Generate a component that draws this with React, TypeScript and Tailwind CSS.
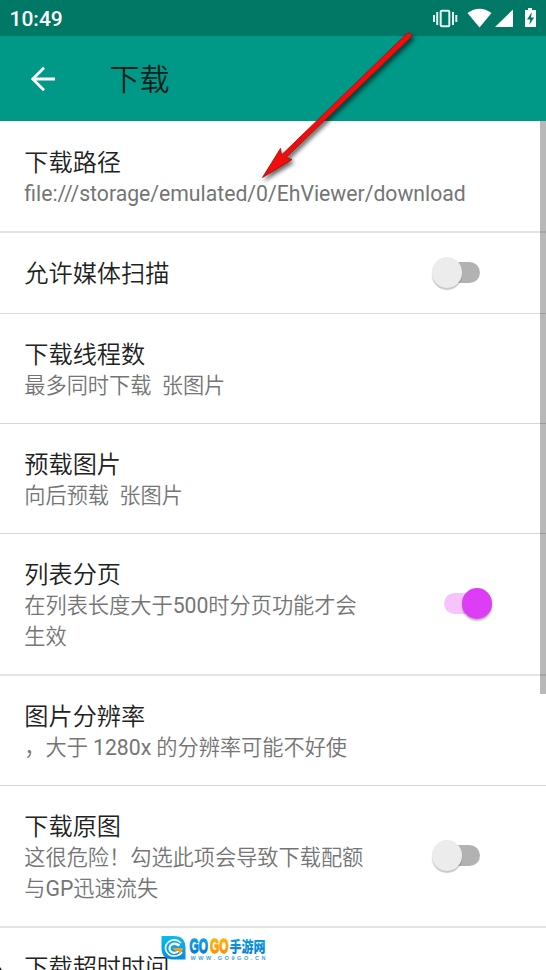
type Item = {
  title: string;
  lines?: string[];
  row: string;
  checked?: boolean;
};

const items: Item[] = [
  { title: "下载路径", lines: ["file:///storage/emulated/0/EhViewer/download"], row: "h-[112px] border-b-2 border-[#e4e4e4]" },
  { title: "允许媒体扫描", row: "h-[81px] border-b border-[#dadada]", checked: false },
  { title: "下载线程数", lines: ["最多同时下载  张图片"], row: "h-[110px] border-b border-[#d6d6d6]" },
  { title: "预载图片", lines: ["向后预载  张图片"], row: "h-[110px] border-b border-[#d6d6d6]" },
  { title: "列表分页", lines: ["在列表长度大于500时分页功能才会", "生效"], row: "h-[142px] border-b-2 border-[#e4e4e4]", checked: true },
  { title: "图片分辨率", lines: ["，大于 1280x 的分辨率可能不好使"], row: "h-[110px] border-b border-[#d6d6d6]" },
  { title: "下载原图", lines: ["这很危险！勾选此项会导致下载配额", "与GP迅速流失"], row: "h-[142px] border-b-2 border-[#e4e4e4]", checked: false },
];

function Toggle({ checked }: { checked: boolean }) {
  if (checked) {
    return (
      <div className="mr-[54px] mb-[2px] flex h-[31px] w-[48px] items-center rounded-full">
        <div className="h-[21px] w-[33px] rounded-l-full bg-[#f4c4fb]" />
        <div className="-ml-[15px] h-[31px] w-[30px] shrink-0 rounded-full bg-[#dd3df5] shadow-[0_2px_2px_rgba(0,0,0,0.28)]" />
      </div>
    );
  }
  return (
    <div className="mr-[66px] mb-[2px] flex h-[31px] w-[48px] items-center">
      <div className="z-10 h-[31px] w-[30px] shrink-0 rounded-full bg-[#ececec] shadow-[0_2px_1px_rgba(0,0,0,0.22)]" />
      <div className="-ml-[15px] h-[21px] w-[33px] shrink-0 rounded-r-full bg-[#b2b2b2]" />
    </div>
  );
}

// Latin runs use the regular weight, Chinese stays a bit lighter
function Summary({ text }: { text: string }) {
  return (
    <div className="text-[21.200px] leading-[31px] font-[350] whitespace-pre text-[#757575]">
      {text.split(/([\x21-\x7e]+)/).map((part, i) => (
        <span key={i} className={i % 2 ? "font-normal" : undefined}>
          {part}
        </span>
      ))}
    </div>
  );
}

function StatusBar() {
  return (
    <div className="flex h-9 items-center justify-between bg-[#007866] pl-[9.500px] text-white">
      <span className="pt-px text-[21px] leading-9 font-medium">10:49</span>
      <svg width="116" height="36" viewBox="430 0 116 36" fill="#fff">
        <rect x="440.7" y="10.7" width="8.6" height="15.6" rx="1" fill="none" stroke="#e6f5f2" strokeWidth="2" />
        <path d="M437.2 12v13M453 12v13M434 15v7M456.3 15v7" stroke="#e6f5f2" strokeWidth="2" />
        <path d="M467.5 13Q479.5 4.500 491.500 13L479.500 27.500Z" />
        <path d="M513 9.500V27H495Z" />
        <path d="M528 8h4v2h4v17h-11V10h3Z" />
        <path d="M531.800 12L527 19.500h3.200L529.200 25l5-7.500h-3.200Z" fill="#007866" />
      </svg>
    </div>
  );
}

function Watermark() {
  return (
    <div className="absolute top-[936px] left-[161px] flex">
      <svg width="25" height="25" viewBox="0 0 25 25">
        <defs>
          <linearGradient id="badge" x1="0" y1="0" x2="0" y2="1">
            <stop offset="0" stopColor="#08bdf0" />
            <stop offset="1" stopColor="#078bdc" />
          </linearGradient>
        </defs>
        <path d="M0.500 0H13Q24.500 0 24.500 12V23.500H12Q0.500 23.500 0.500 12Z" fill="url(#badge)" />
        <path d="M20 7Q15 2 9 5Q3 8.500 5 14.500Q7 20 13 20Q18.500 20 21 16" fill="none" stroke="#fff" strokeWidth="1.600" />
        <path d="M18.500 9.500Q13 6 9.500 9.500Q7 13.500 10.500 16Q14 18 17.500 15" fill="none" stroke="#fff" strokeWidth="2.200" />
        <path d="M11.500 12H22Q21.500 16 18.500 17.500L17.500 14.500H13.500Z" fill="#f7a11b" />
      </svg>
      <svg width="82" height="26" viewBox="0 0 82 26" className="overflow-visible">
        <defs>
          <linearGradient id="blue" x1="0" y1="0" x2="0" y2="1">
            <stop offset="0" stopColor="#08aceb" />
            <stop offset="1" stopColor="#0873cc" />
          </linearGradient>
          <linearGradient id="orange" x1="0" y1="0" x2="0" y2="1">
            <stop offset="0" stopColor="#ffc000" />
            <stop offset="1" stopColor="#ff8500" />
          </linearGradient>
        </defs>
        <g fontFamily="'Liberation Sans Narrow', 'Liberation Sans', sans-serif" fontWeight="700" fontSize="21" strokeWidth="1.300">
          <text x="3.500" y="17" textLength="18.500" lengthAdjust="spacingAndGlyphs" fill="url(#blue)" stroke="url(#blue)">GO</text>
          <text x="24" y="17" textLength="18.500" lengthAdjust="spacingAndGlyphs" fill="url(#orange)" stroke="url(#orange)">GO</text>
        </g>
        <text x="43.500" y="16" textLength="36" lengthAdjust="spacingAndGlyphs" fontFamily="'Noto Sans CJK SC', sans-serif" fontWeight="900" fontSize="15" fill="url(#blue)">手游网</text>
        <text x="4.500" y="24" textLength="75" fontFamily="'Liberation Sans', sans-serif" fontWeight="700" fontSize="5.500" fill="#3aa5df">WWW.GO9GO.CN</text>
      </svg>
    </div>
  );
}

function Arrow() {
  return (
    <svg className="absolute top-[20px] left-[240px] drop-shadow-[2px_3px_2px_rgba(0,0,0,0.6)]" width="190" height="170" viewBox="0 0 190 170">
      <path
        d="M22.500 157.500L40.500 128.500L41.500 135L167 13.500Q170 11.500 171.500 14.500Q172 16 170 18L46 137.500L52 139.500Z"
        fill="#f20d0d"
        stroke="#a61010"
        strokeWidth="0.900"
      />
    </svg>
  );
}

export default function App() {
  return (
    <div className="relative h-[970px] w-[546px] overflow-hidden bg-white font-[Roboto,'Noto_Sans_CJK_SC',sans-serif]" lang="zh-CN">
      <StatusBar />
      <header className="flex h-[85px] items-center bg-[#009887] pl-[30px]">
        <svg width="26" height="26" viewBox="0 0 26 26" fill="none" stroke="#fff" strokeWidth="2.800">
          <path d="M25 13H3M14 1.800L2.800 13L14 24.200" />
        </svg>
        <h1 className="ml-[53.500px] pt-[2px] text-[30px] leading-[40px] font-[350] text-[#10201d]">下载</h1>
      </header>

      <main>
        {items.map((item) => (
          <div key={item.title} className={`flex items-center justify-between pl-[24.300px] ${item.row}`}>
            <div className={item.lines ? "pt-[3px]" : undefined}>
              <div className="pt-px text-[24.200px] leading-[30px] font-[350] text-[#212121]">{item.title}</div>
              {item.lines?.map((line) => (
                <Summary key={line} text={line} />
              ))}
            </div>
            {item.checked !== undefined && <Toggle checked={item.checked} />}
          </div>
        ))}
        <div className="pt-[24px] pl-[24.300px] text-[24.200px] leading-[32px] font-[350] text-[#212121]">下载超时时间</div>
      </main>

      <div className="absolute top-[121px] right-0 h-[573px] w-[6px] bg-black/28" />
      <svg className="absolute bottom-0 left-0" width="3" height="4">
        <path d="M0 1L2 4H0Z" fill="#222" />
      </svg>
      <Arrow />
      <Watermark />
    </div>
  );
}
